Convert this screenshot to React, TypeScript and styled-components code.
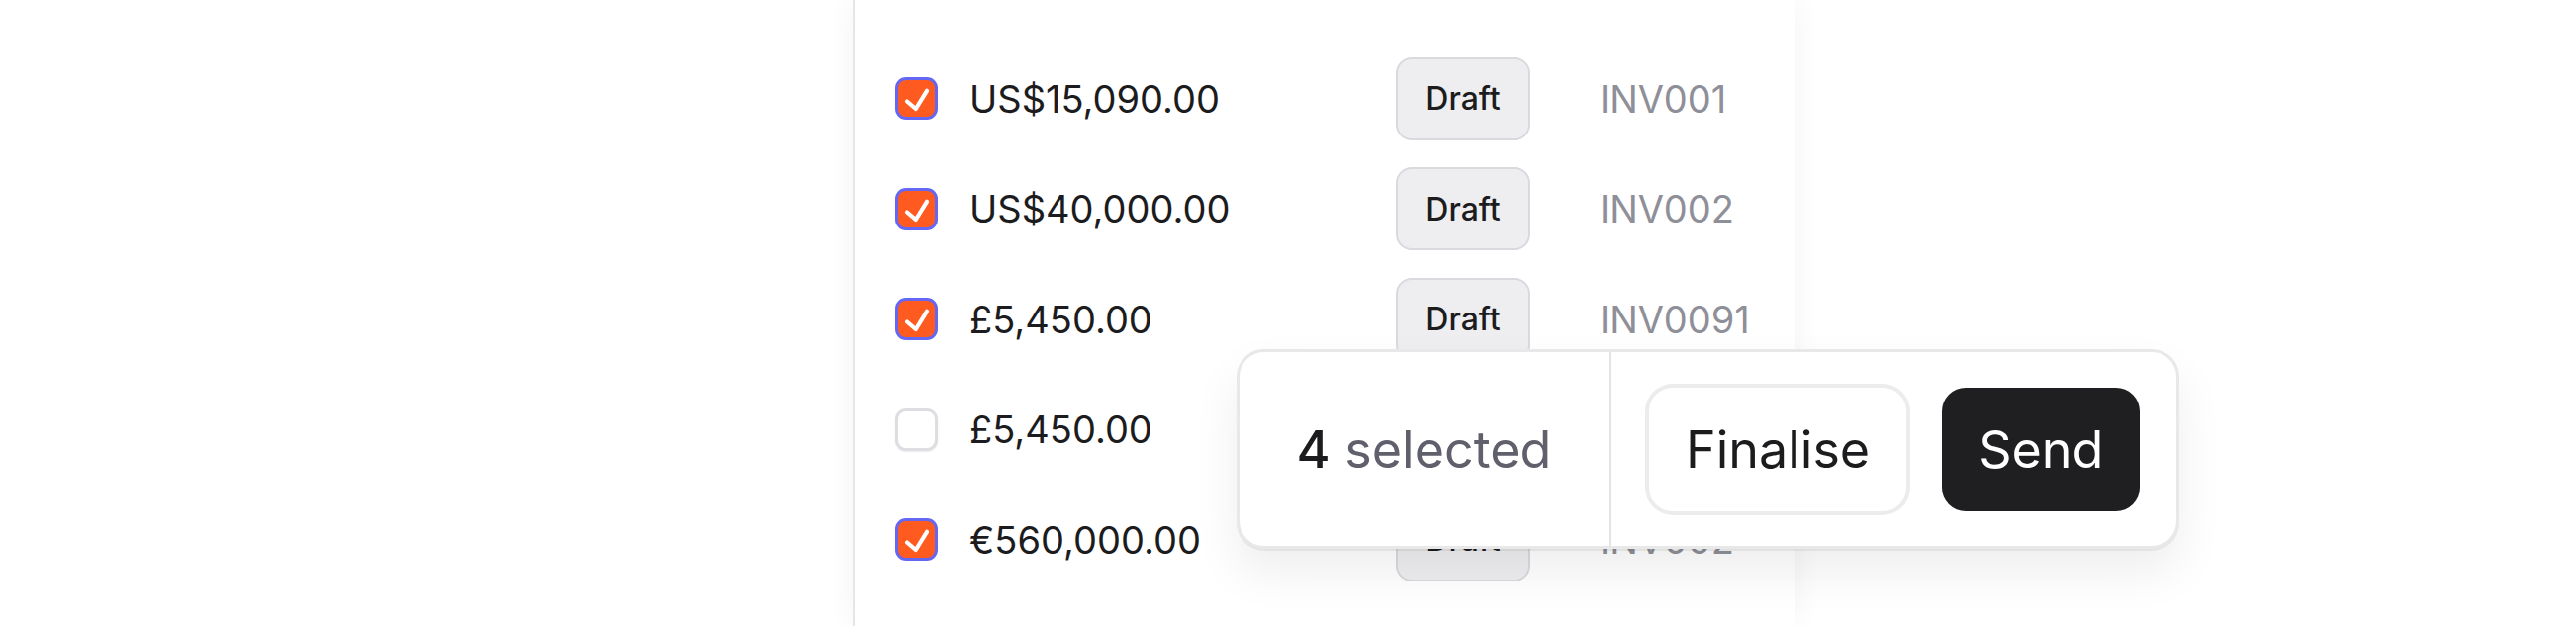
import styled, { createGlobalStyle } from 'styled-components'

const GlobalStyle = createGlobalStyle`
  html, body {
    margin: 0;
    padding: 0;
    background: #fff;
    font-family: Inter, "Noto Sans", sans-serif;
  }
`

const Page = styled.div`
  position: relative;
  width: 2604px;
  height: 633px;
  overflow: hidden;
`
const Panel = styled.div`
  margin-left: 862px;
  width: 953px;
  height: 633px;
  box-sizing: border-box;
  background: #fff;
  border-left: 2px solid #e6e6ea;
  box-shadow: 0 0 28px rgba(0, 0, 0, 0.05);
  padding: 44px 0 0 41px;
`
const Row = styled.div`
  display: flex;
  align-items: center;
  height: 111.5px;
`
const Check = styled.span<{ $on: boolean }>`
  width: 43px;
  height: 43px;
  box-sizing: border-box;
  flex-shrink: 0;
  border-radius: 11px;
  border: 3px solid ${p => (p.$on ? '#6467f2' : '#dedee2')};
  background: ${p => (p.$on ? '#ff5a1f' : '#fff')};
  box-shadow: ${p => (p.$on ? 'none' : '0 1px 2px rgba(0,0,0,0.08)')};
  display: flex;
  align-items: center;
  justify-content: center;
`
const Amount = styled.div`
  width: 431px;
  margin-left: 32px;
  font-size: 38px;
  color: #1c1c1e;
`
const Badge = styled.div`
  width: 136px;
  height: 84px;
  box-sizing: border-box;
  border: 2.5px solid #d9d9de;
  background: #eeeef0;
  border-radius: 16px;
  display: flex;
  align-items: center;
  justify-content: center;
  font-size: 32px;
  font-weight: 500;
  color: #1c1c1e;
`
const Ref = styled.div`
  margin-left: 70px;
  font-size: 38px;
  color: #8f8f99;
`
const Bar = styled.div`
  position: absolute;
  left: 1250px;
  top: 353px;
  width: 953px;
  height: 202px;
  box-sizing: border-box;
  display: flex;
  background: #fff;
  border: 3px solid #e8e8e8;
  border-radius: 28px;
  box-shadow: 0 2px 0 rgba(0, 0, 0, 0.06), 0 24px 48px rgba(0, 0, 0, 0.07);
`
const Count = styled.div`
  width: 373px;
  flex-shrink: 0;
  display: flex;
  align-items: center;
  justify-content: center;
  white-space: pre;
  font-size: 52px;
  color: #60606c;
  border-right: 3px solid #e4e4e8;
  b {
    color: #1c1c1e;
    font-weight: 500;
  }
`
const Actions = styled.div`
  flex: 1;
  display: flex;
  align-items: center;
  gap: 36px;
  padding: 0 37px 0 38px;
`
const Button = styled.button<{ $primary?: boolean }>`
  height: 125px;
  padding: 0 37px;
  border: none;
  border-radius: 24px;
  font-family: inherit;
  font-size: 52px;
  background: ${p => (p.$primary ? '#1f1f21' : '#fff')};
  color: ${p => (p.$primary ? '#fff' : '#1c1c1e')};
  box-shadow: ${p => (p.$primary ? 'none' : '0 0 0 4px #ececec')};
`

const rows = [
  { amount: 'US$15,090.00', ref: 'INV001', on: true },
  { amount: 'US$40,000.00', ref: 'INV002', on: true },
  { amount: '£5,450.00', ref: 'INV0091', on: true },
  { amount: '£5,450.00', ref: 'INV003', on: false },
  { amount: '€560,000.00', ref: 'INV002', on: true },
]

function Tick() {
  return (
    <svg width="37" height="37" viewBox="0 0 37 37" fill="none">
      <path d="M9 21.5 L17.8 29 L29 10.8" stroke="#fff" strokeWidth="4.2" strokeLinecap="round" strokeLinejoin="round" />
    </svg>
  )
}

export default function App() {
  return (
    <Page>
      <GlobalStyle />
      <Panel>
        {rows.map((r, i) => (
          <Row key={i}>
            <Check $on={r.on}>{r.on && <Tick />}</Check>
            <Amount>{r.amount}</Amount>
            <Badge>Draft</Badge>
            <Ref>{r.ref}</Ref>
          </Row>
        ))}
      </Panel>
      <Bar>
        <Count><b>4</b> selected</Count>
        <Actions>
          <Button>Finalise</Button>
          <Button $primary>Send</Button>
        </Actions>
      </Bar>
    </Page>
  )
}
